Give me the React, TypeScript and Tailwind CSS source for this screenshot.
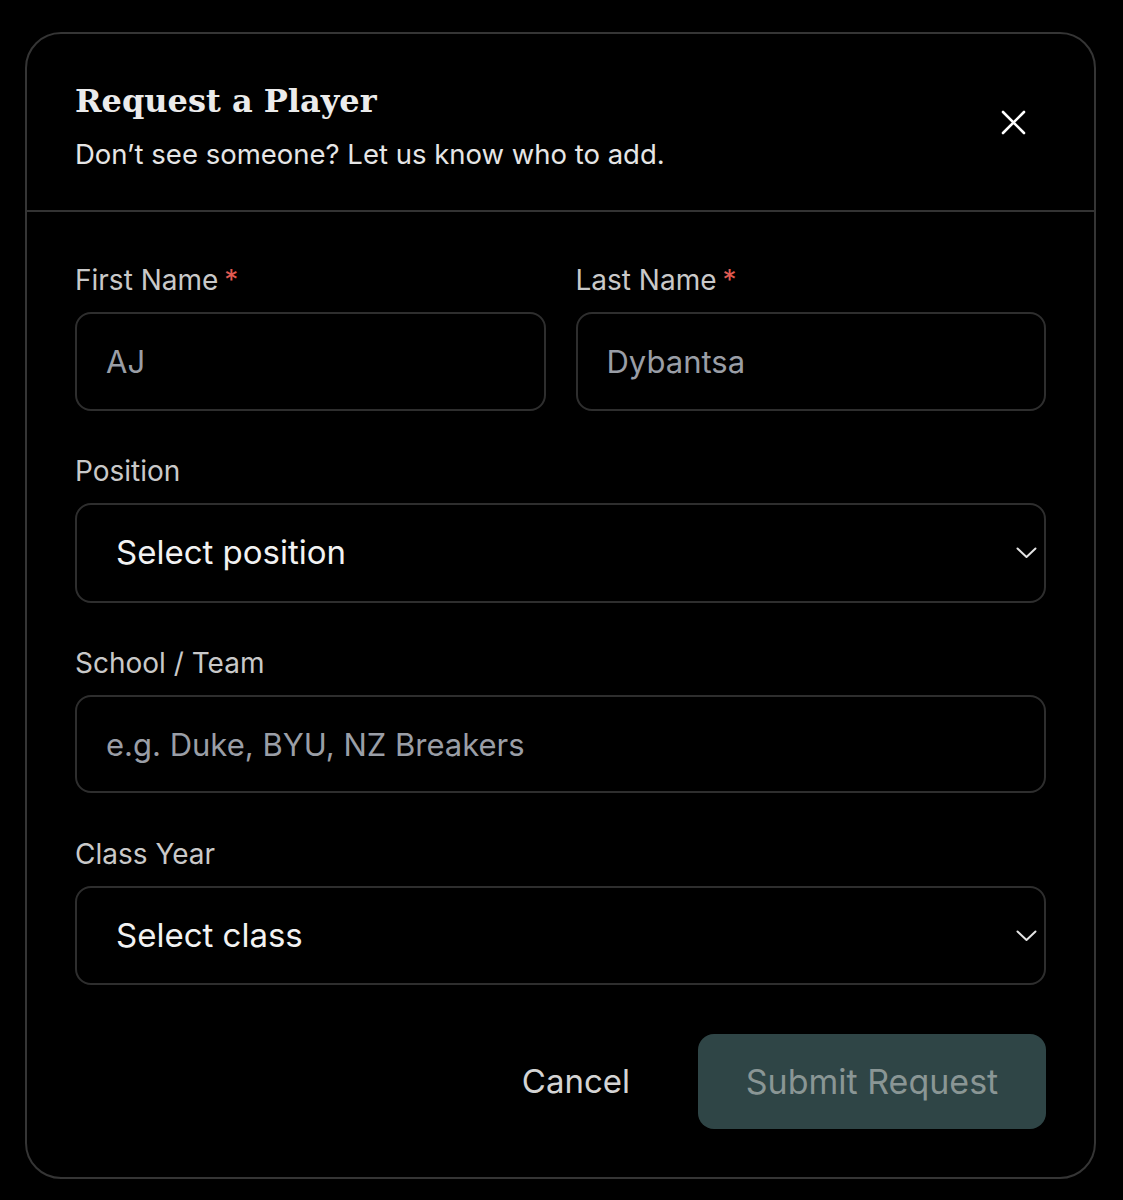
const sans = "font-['Inter','Noto_Sans',sans-serif]"

const Label = ({ text, required }: { text: string; required?: boolean }) => (
  <label className="block mb-4 text-[28px] leading-[32px] text-[#c9c9c9]">
    {text}
    {required && <span className="ml-1.5 text-[#e05a52]">*</span>}
  </label>
)

const TextInput = ({ placeholder, h = 'h-[98px]' }: { placeholder: string; h?: string }) => (
  <input
    readOnly
    placeholder={placeholder}
    className={`block w-full ${h} rounded-2xl border-2 border-[#2e2e2e] bg-black px-[29px] text-[31px] text-[#d0d0d0] placeholder:text-[#9a9ea6] outline-none`}
  />
)

const Chevron = () => (
  <svg width="21" height="12" viewBox="0 0 21 12" fill="none" className="text-[#e4e4e4]">
    <polyline points="1.5,1.5 10.5,10 19.5,1.5" stroke="currentColor" strokeWidth="2" strokeLinecap="round" strokeLinejoin="round" />
  </svg>
)

const SelectBox = ({ text, h }: { text: string; h: string }) => (
  <button
    type="button"
    className={`flex w-full ${h} items-center justify-between rounded-2xl border-2 border-[#2e2e2e] bg-black pl-[39px] pr-[7px] text-[33px] text-[#f2f2f2]`}
  >
    <span>{text}</span>
    <Chevron />
  </button>
)

export default function App() {
  return (
    <div className={`min-h-[1200px] bg-black pt-[32px] pl-[25px] pr-[27px] ${sans}`}>
      <div className="w-[1071px] h-[1147px] rounded-[36px] border-2 border-[#353535] bg-black">
        <div className="flex items-start justify-between h-[178px] border-b-2 border-[#333] pl-[48px] pr-[68px] pt-[47px]">
          <div>
            <h2 className="font-['DejaVu_Serif','Liberation_Serif',serif] font-bold text-[32px] leading-[40px] text-[#ebebeb]">
              Request a Player
            </h2>
            <p className="mt-[17px] text-[27.5px] leading-[32px] text-[#e6e6e6]">
              Don’t see someone? Let us know who to add.
            </p>
          </div>
          <svg width="25" height="25" viewBox="0 0 25 25" className="mt-[29px] text-white">
            <path d="M2 2 L23 23 M23 2 L2 23" stroke="currentColor" strokeWidth="2.6" strokeLinecap="round" />
          </svg>
        </div>

        <div className="px-[48px] pt-[52px]">
          <div className="grid grid-cols-2 gap-[30px]">
            <div>
              <Label text="First Name" required />
              <TextInput placeholder="AJ" h="h-[99px]" />
            </div>
            <div>
              <Label text="Last Name" required />
              <TextInput placeholder="Dybantsa" h="h-[99px]" />
            </div>
          </div>

          <div className="mt-[44px]">
            <Label text="Position" />
            <SelectBox text="Select position" h="h-[100px]" />
          </div>

          <div className="mt-[44px]">
            <Label text="School / Team" />
            <TextInput placeholder="e.g. Duke, BYU, NZ Breakers" />
          </div>

          <div className="mt-[45px]">
            <Label text="Class Year" />
            <SelectBox text="Select class" h="h-[99px]" />
          </div>

          <div className="mt-[49px] flex items-center justify-end gap-[68px]">
            <button type="button" className="text-[33px] text-[#d4d4d4]">
              Cancel
            </button>
            <button
              type="button"
              className="h-[95px] w-[348px] rounded-2xl bg-[#2f4546] text-[34px] text-[#8a9695]"
            >
              Submit Request
            </button>
          </div>
        </div>
      </div>
    </div>
  )
}
